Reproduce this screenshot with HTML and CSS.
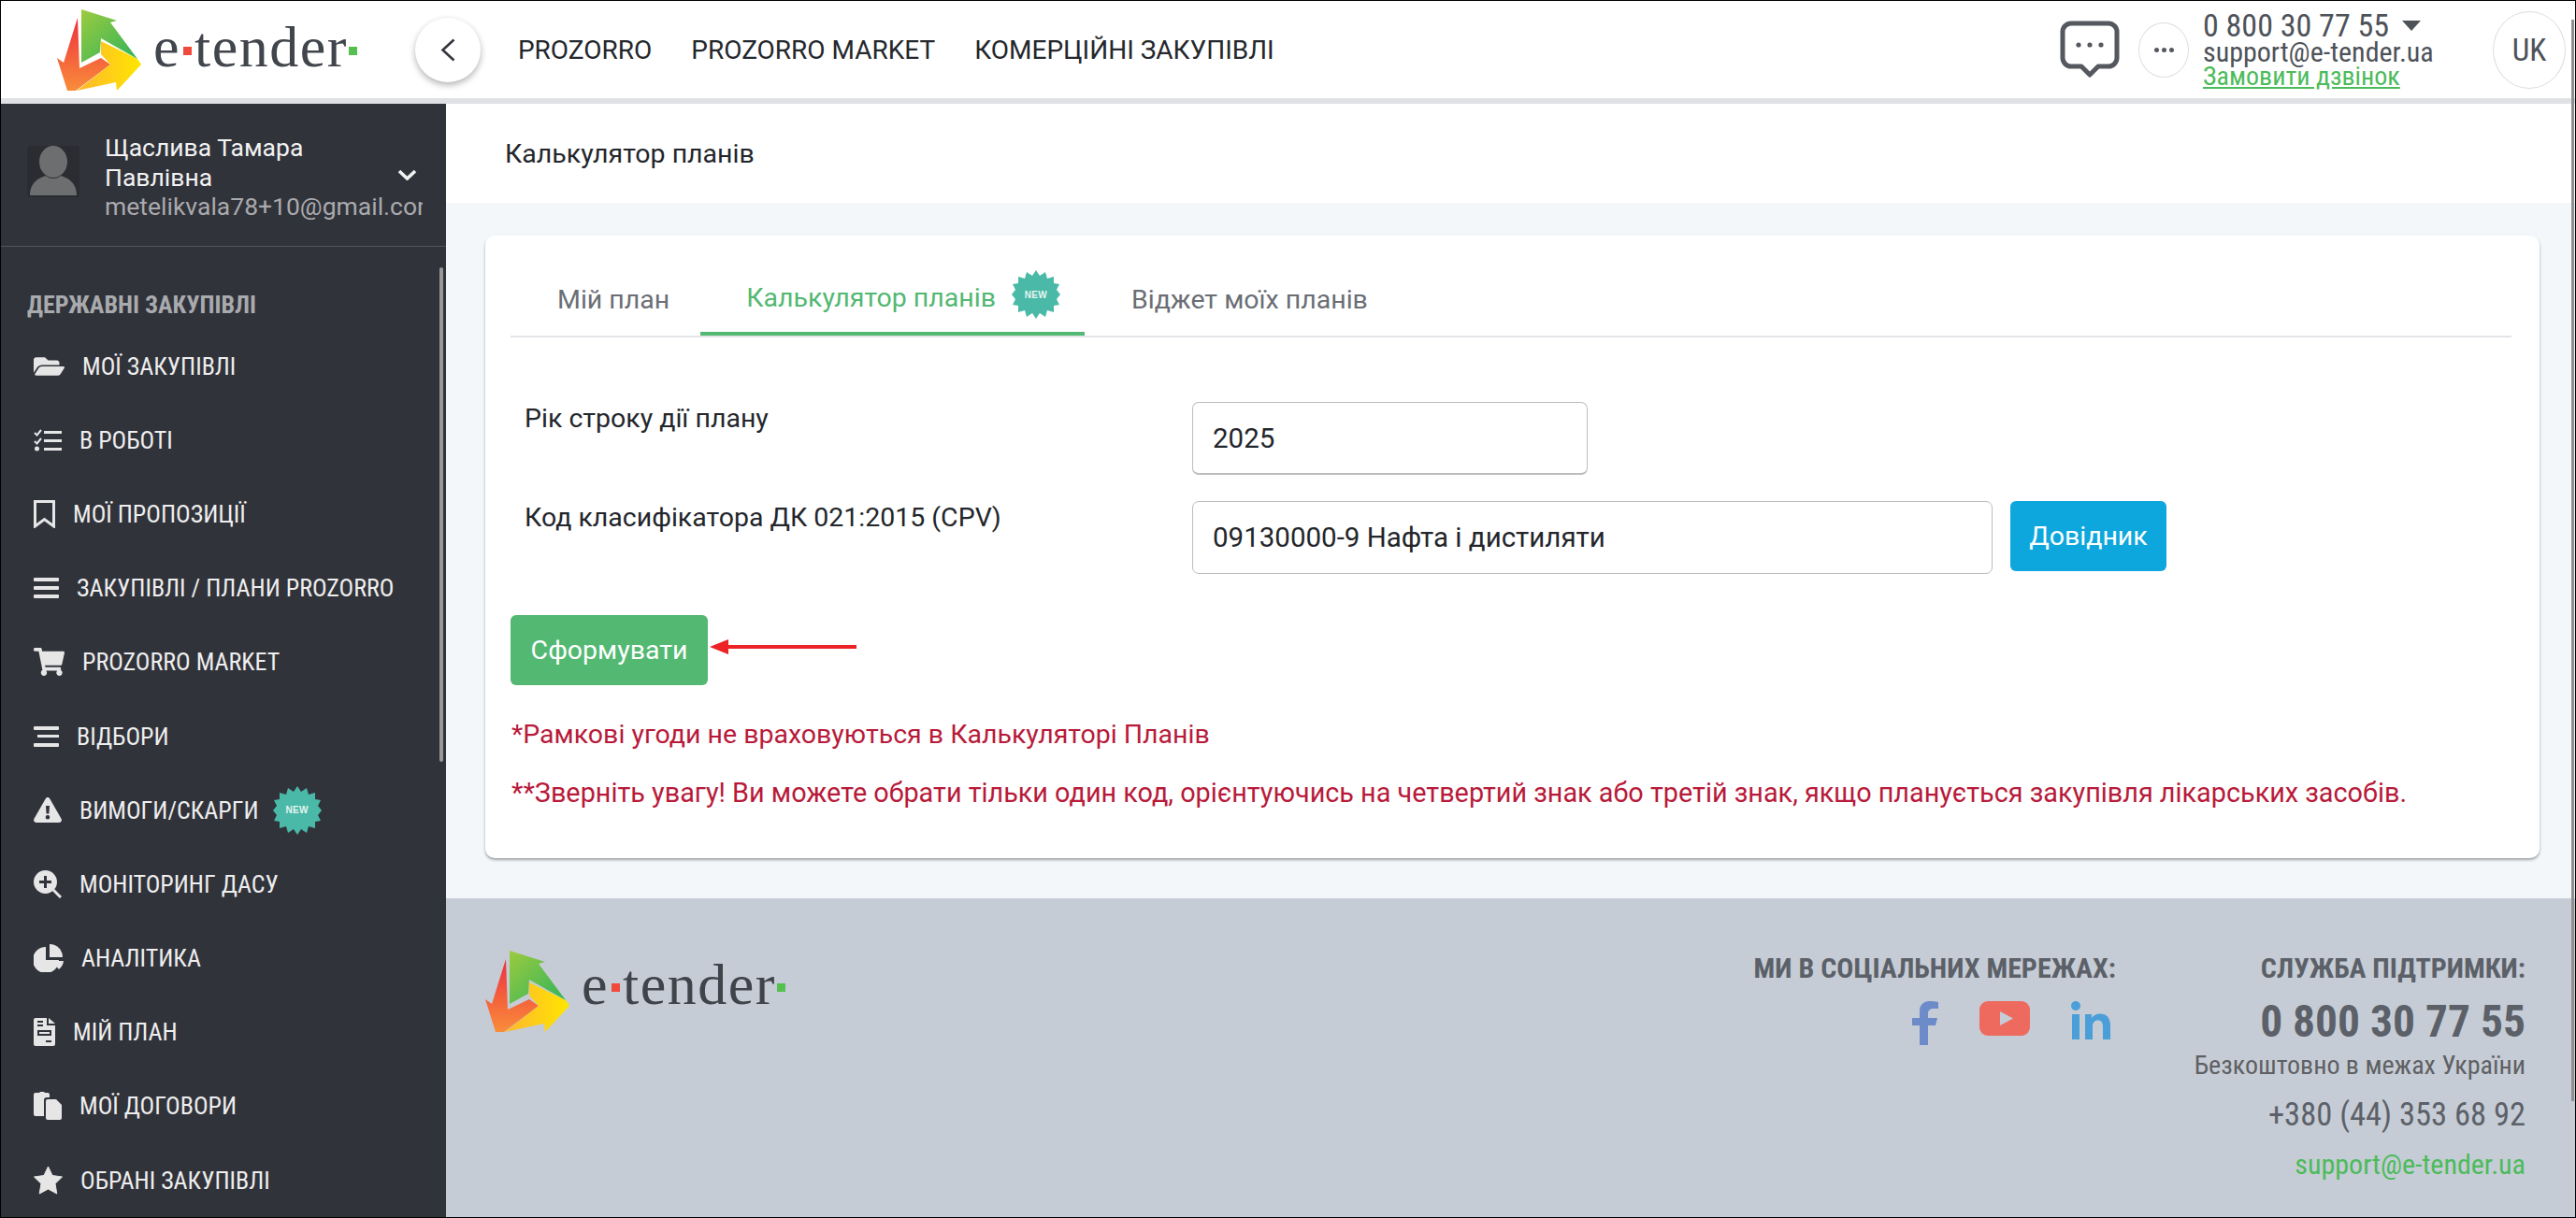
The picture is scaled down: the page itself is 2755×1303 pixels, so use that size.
FILE: index.html
```html
<!DOCTYPE html>
<html lang="uk">
<head>
<meta charset="utf-8">
<title>Калькулятор планів</title>
<link rel="stylesheet" href="styles.css">
</head>
<body>
<svg class="defs" width="0" height="0" aria-hidden="true">
  <defs>
    <linearGradient id="gGreen" x1="0" y1="0" x2="1" y2="1"><stop offset="0" stop-color="#9ccb3f"/><stop offset="1" stop-color="#2fb35a"/></linearGradient>
    <linearGradient id="gYellow" x1="0" y1="0" x2="1" y2="0"><stop offset="0" stop-color="#fdb62f"/><stop offset="1" stop-color="#ffe600"/></linearGradient>
    <linearGradient id="gRed" x1="0" y1="0" x2="0" y2="1"><stop offset="0" stop-color="#ee2f3f"/><stop offset="1" stop-color="#f98d3a"/></linearGradient>
    <symbol id="logoMark" viewBox="0 0 90 87">
      <path fill="url(#gRed)" d="M22 9 24 63 47 52 57 59 20 87H11L0 52 7 57Z"/>
      <path fill="url(#gYellow)" d="M47 34 86 53 90 59 64 87 63 78 21 87 57 59 47 48Z"/>
      <path fill="url(#gGreen)" d="M26 0 64 12 57 14 86 53 47 31 46 46 26 57Z"/>
    </symbol>
    <symbol id="burst" viewBox="0 0 52 52">
      <path fill="#4ab9a7" d="M26 0 30 6 36 2 38 9 45 7 45 14 51 15 48 21 52 26 48 31 51 37 45 38 45 45 38 43 36 50 30 46 26 52 22 46 16 50 14 43 7 45 7 38 1 37 4 31 0 26 4 21 1 15 7 14 7 7 14 9 16 2 22 6Z"/>
    </symbol>
  </defs>
</svg>

<div class="frame">
  <header class="topbar">
    <a class="logo">
      <svg class="logo-mark"><use href="#logoMark"/></svg>
      <span class="wordmark">e<i class="dot dot-red"></i>tender<i class="dot dot-green"></i></span>
    </a>
    <button class="back" aria-label="Назад">
      <svg width="16" height="25" viewBox="0 0 16 25"><path d="M14.500 1.500 2.500 12.500 14.500 23.500" fill="none" stroke="#33363d" stroke-width="2.600"/></svg>
    </button>
    <nav class="topnav">
      <a>PROZORRO</a>
      <a>PROZORRO MARKET</a>
      <a>КОМЕРЦІЙНІ ЗАКУПІВЛІ</a>
    </nav>
    <div class="top-right">
      <svg class="chat" width="64" height="62" viewBox="0 0 64 62">
        <path d="M12 3H52A9 9 0 0 1 61 12V40A9 9 0 0 1 52 49H41L32 58 23 49H12A9 9 0 0 1 3 40V12A9 9 0 0 1 12 3Z" fill="none" stroke="#55585f" stroke-width="5" stroke-linejoin="round"/>
        <circle cx="20" cy="26" r="2.6" fill="#55585f"/><circle cx="32" cy="26" r="2.6" fill="#55585f"/><circle cx="44" cy="26" r="2.6" fill="#55585f"/>
      </svg>
      <div class="more"><i></i><i></i><i></i></div>
      <div class="contacts">
        <div class="c-phone">0 800 30 77 55 <i class="caret"></i></div>
        <div class="c-mail">support@e-tender.ua</div>
        <a class="c-link">Замовити дзвінок</a>
      </div>
      <div class="lang">UK</div>
    </div>
  </header>

  <div class="main">
    <aside class="sidebar">
      <div class="user">
        <svg class="avatar" width="56" height="55" viewBox="0 0 56 55">
          <rect width="56" height="55" rx="4" fill="#2a2c31"/>
          <ellipse cx="28" cy="17" rx="15" ry="17" fill="#6d6e70"/>
          <path d="M3 53C3 38 14 34 20 32 24 36 32 36 36 32 42 34 53 38 53 53Z" fill="#6d6e70"/>
        </svg>
        <div class="user-text">
          <div class="user-name">Щаслива Тамара<br>Павлівна</div>
          <div class="user-mail">metelikvala78+10@gmail.com</div>
        </div>
        <svg class="user-chev" width="21" height="12" viewBox="0 0 21 12"><path d="M2 2 10.500 10 19 2" fill="none" stroke="#f2f2f2" stroke-width="3.600"/></svg>
      </div>
      <div class="side-title">ДЕРЖАВНІ ЗАКУПІВЛІ</div>
      <ul class="menu">
        <li><svg width="33" height="26" viewBox="0 0 576 512" preserveAspectRatio="none"><path d="M572.694 292.093L500.27 416.248A63.997 63.997 0 0 1 444.989 448H45.025c-18.523 0-30.064-20.093-20.731-36.093l72.424-124.155A64 64 0 0 1 152 256h399.964c18.523 0 30.064 20.093 20.73 36.093zM152 224h328v-48c0-26.51-21.49-48-48-48H272l-64-64H48C21.49 64 0 85.49 0 112v278.046l69.077-118.418C86.214 242.25 117.989 224 152 224z"/></svg>МОЇ ЗАКУПІВЛІ</li>
        <li><svg width="30" height="24" viewBox="0 0 30 24"><path d="M1 4 3.500 6.500 8 1M1 13 3.500 15.500 8 10" fill="none" stroke="#e6e6e6" stroke-width="2"/><circle cx="3.500" cy="21" r="2.500"/><rect x="11" y="2" width="19" height="3"/><rect x="11" y="11" width="19" height="3"/><rect x="11" y="20" width="19" height="3"/></svg>В РОБОТІ</li>
        <li><svg width="23" height="30" viewBox="0 0 23 30"><path d="M1.500 1.500H21.500V28L11.500 20.500 1.500 28Z" fill="none" stroke="#e6e6e6" stroke-width="3"/></svg>МОЇ ПРОПОЗИЦІЇ</li>
        <li><svg width="27" height="22" viewBox="0 0 27 22"><rect width="27" height="4" rx="1"/><rect y="9" width="27" height="4" rx="1"/><rect y="18" width="27" height="4" rx="1"/></svg>ЗАКУПІВЛІ / ПЛАНИ PROZORRO</li>
        <li><svg width="33" height="30" viewBox="0 0 576 512" preserveAspectRatio="none"><path d="M528.12 301.319l47.273-208C578.806 78.301 567.391 64 551.99 64H159.208l-9.166-44.81C147.758 8.021 137.93 0 126.529 0H24C10.745 0 0 10.745 0 24v16c0 13.255 10.745 24 24 24h69.883l70.248 343.435C147.325 417.1 136 435.222 136 456c0 30.928 25.072 56 56 56s56-25.072 56-56c0-15.674-6.447-29.835-16.824-40h209.647C430.447 426.165 424 440.326 424 456c0 30.928 25.072 56 56 56s56-25.072 56-56c0-22.172-12.888-41.332-31.579-50.405l5.517-24.276c3.413-15.018-8.002-29.319-23.403-29.319H218.117l-6.545-32h293.145c11.206 0 20.92-7.754 23.403-18.681z"/></svg>PROZORRO MARKET</li>
        <li><svg width="27" height="22" viewBox="0 0 27 22"><rect width="27" height="4" rx="1"/><rect x="4" y="9" width="23" height="3"/><rect y="18" width="27" height="4" rx="1"/></svg>ВІДБОРИ</li>
        <li><svg width="30" height="27" viewBox="0 0 30 27"><path fill-rule="evenodd" d="M15 0C16 0 16.800.6 17.300 1.500L29.600 23C30.600 24.800 29.300 27 27.300 27H2.700C.7 27-.6 24.800.4 23L12.700 1.500C13.200.6 14 0 15 0ZM13 9 13.600 17.500H16.400L17 9ZM15 19A2.300 2.300 0 1 0 15 23.600 2.300 2.300 0 0 0 15 19Z"/></svg>ВИМОГИ/СКАРГИ<span class="badge side-badge"><svg><use href="#burst"/></svg><b>NEW</b></span></li>
        <li><svg width="30" height="30" viewBox="0 0 30 30"><path fill-rule="evenodd" d="M12.500 0A12.500 12.500 0 1 1 12.500 25 12.500 12.500 0 0 1 12.500 0ZM11 6V11H6V14H11V19H14V14H19V11H14V6Z"/><path d="M21 21 29 29" stroke="#e6e6e6" stroke-width="3"/></svg>МОНІТОРИНГ ДАСУ</li>
        <li><svg width="32" height="30" viewBox="0 0 32 30"><path d="M13 3V17H27A14 14 0 1 1 13 3Z"/><path d="M17 0A14 14 0 0 1 31 14H17Z"/><path d="M19 18H32A14 14 0 0 1 27 27Z"/></svg>АНАЛІТИКА</li>
        <li><svg width="23" height="30" viewBox="0 0 23 30"><path fill-rule="evenodd" d="M2 0H14V8H23V28A2 2 0 0 1 21 30H2A2 2 0 0 1 0 28V2A2 2 0 0 1 2 0ZM4 3V5H10V3ZM4 7V9H10V7ZM4 13V19H19V13ZM6 15H17V17H6ZM13 24V26H19V24Z"/><path d="M16 0 23 6H16Z"/></svg>МІЙ ПЛАН</li>
        <li><svg width="30" height="30" viewBox="0 0 30 30"><path d="M2 1H6.500A2.500 2.500 0 0 1 11.500 1H15A2 2 0 0 1 17 3V6H14A3 3 0 0 0 11 9V26H2A2 2 0 0 1 0 24V3A2 2 0 0 1 2 1Z"/><path d="M15 8H24L30 14V28A2 2 0 0 1 28 30H15A2 2 0 0 1 13 28V10A2 2 0 0 1 15 8Z"/></svg>МОЇ ДОГОВОРИ</li>
        <li><svg width="31" height="31" viewBox="0 0 31 31"><path d="M15.500 1 20 10.500 30.500 12 23 19.300 24.800 30 15.500 25 6.200 30 8 19.300.5 12 11 10.500Z" stroke="#e6e6e6" stroke-linejoin="round"/></svg>ОБРАНІ ЗАКУПІВЛІ</li>
      </ul>
      <i class="side-scroll"></i>
    </aside>

    <div class="content">
      <div class="crumb">Калькулятор планів</div>
      <section class="page">
        <div class="card">
          <div class="tabs">
            <a class="tab">Мій план</a>
            <a class="tab tab-active">Калькулятор планів<span class="badge tab-badge"><svg><use href="#burst"/></svg><b>NEW</b></span></a>
            <a class="tab">Віджет моїх планів</a>
          </div>
          <div class="form">
            <label class="f-label">Рік строку дії плану</label>
            <div class="f-field"><div class="input input-year">2025</div></div>
            <label class="f-label">Код класифікатора ДК 021:2015 (CPV)</label>
            <div class="f-field"><div class="input input-code">09130000-9 Нафта і дистиляти</div><button class="btn btn-blue">Довідник</button></div>
          </div>
          <div class="action">
            <button class="btn btn-green">Сформувати</button>
            <svg class="arrow" width="157" height="18" viewBox="0 0 157 18"><path d="M0 9 20 1V7H157V11H20V17Z" fill="#ed2224"/></svg>
          </div>
          <p class="note">*Рамкові угоди не враховуються в Калькуляторі Планів</p>
          <p class="note note-long">**Зверніть увагу! Ви можете обрати тільки один код, орієнтуючись на четвертий знак або третій знак, якщо планується закупівля лікарських засобів.</p>
        </div>
      </section>
      <footer class="footer">
        <a class="logo foot-logo">
          <svg class="logo-mark"><use href="#logoMark"/></svg>
          <span class="wordmark">e<i class="dot dot-red"></i>tender<i class="dot dot-green"></i></span>
        </a>
        <div class="social">
          <div class="foot-title">МИ В СОЦІАЛЬНИХ МЕРЕЖАХ:</div>
          <div class="social-icons">
            <svg width="28" height="47" viewBox="0 0 28 47"><path fill="#6d8ac9" d="M8 47V26H0V18H8V11C8 4 12 0 19 0 23 0 28 1 28 1V8H24C19 8 17 10 17 13V18H27L25 26H17V47Z"/></svg>
            <svg width="54" height="37" viewBox="0 0 54 37"><rect width="54" height="37" rx="9" fill="#ef6a5e"/><path d="M22 11 36 18.500 22 26Z" fill="#c5ccd5"/></svg>
            <svg width="42" height="41" viewBox="0 0 42 41"><g fill="#4a9fd8"><circle cx="5" cy="5" r="5"/><rect x="1" y="14" width="8" height="27"/><path d="M15 14H22V18C24 15 27 13.500 31 13.500 38 13.500 42 18 42 26V41H34V27C34 23 32 20.500 29 20.500 25 20.500 23 23 23 27V41H15Z"/></g></svg>
          </div>
        </div>
        <div class="support">
          <div class="foot-title">СЛУЖБА ПІДТРИМКИ:</div>
          <div class="sup-phone">0 800 30 77 55</div>
          <div class="sup-free">Безкоштовно в межах України</div>
          <div class="sup-tel">+380 (44) 353 68 92</div>
          <a class="sup-mail">support@e-tender.ua</a>
        </div>
      </footer>
    </div>
  </div>
  <i class="page-scroll"></i>
</div>
</body>
</html>
```
FILE: styles.css
```css
* { box-sizing: border-box; }
html, body { margin: 0; height: 100%; overflow: hidden; }
body { font-family: Roboto, "Liberation Sans", sans-serif; color: #23262b; background: #fff; }
.defs { position: absolute; }
i { font-style: normal; display: block; }
ul { list-style: none; margin: 0; padding: 0; }
button { font-family: inherit; border: 0; }

.frame { position: relative; height: 1303px; border: 1px solid #000; display: flex; flex-direction: column; overflow: hidden; }

/* top bar */
.topbar { height: 110px; flex: none; border-bottom: 6px solid #dfe1e5; display: flex; align-items: center; background: #fff; padding-left: 60px; }
.logo { display: flex; align-items: center; }
.logo-mark { width: 90px; height: 87px; flex: none; }
.wordmark { font-family: "Liberation Serif", serif; font-size: 62px; line-height: 1; color: #41454c; display: flex; align-items: center; margin: 0 0 6px 13px; letter-spacing: 1.500px; }
.dot { width: 9px; height: 9px; margin: 8px 3px 0; flex: none; }
.dot-red { background: #f0493e; }
.dot-green { background: #55c04f; margin-left: 1px; }
.back { width: 70px; height: 69px; margin-left: 59px; border-radius: 50%; background: #fff; box-shadow: 0 3px 7px rgba(0,0,0,.3); display: flex; align-items: center; justify-content: center; padding: 0; flex: none; }
.topnav { display: flex; gap: 42px; margin-left: 40px; font-size: 28px; color: #24272c; }
.top-right { margin-left: auto; display: flex; align-items: center; padding-right: 10px; }
.chat { margin-right: 20px; }
.more { width: 54px; height: 59px; border: 1px solid #ddd; border-radius: 50%; display: flex; align-items: center; justify-content: center; gap: 3px; margin-right: 15px; }
.more i { width: 5px; height: 5px; border-radius: 50%; background: #55585f; }
.contacts { width: 310px; font-stretch: 75%; color: #4e5259; line-height: 1; }
.c-phone { font-size: 34px; line-height: 32px; display: flex; align-items: center; white-space: pre; }
.caret { width: 0; height: 0; border: 10px solid transparent; border-top: 11px solid #4e5259; border-bottom: 0; margin-left: 6px; }
.c-mail { font-size: 30px; line-height: 26px; }
.c-link { font-size: 28px; line-height: 26px; color: #4cbb5a; text-decoration: underline; display: block; }
.lang { width: 78px; height: 83px; border: 1px solid #ddd; border-radius: 50%; display: flex; align-items: center; justify-content: center; font-size: 33px; font-stretch: 75%; color: #4e5259; }

/* main layout */
.main { flex: 1; display: flex; min-height: 0; }
.sidebar { width: 476px; flex: none; background: #31333b; color: #e6e6e6; position: relative; overflow: hidden; }
.user { height: 153px; border-bottom: 1px solid #53555c; display: flex; padding: 45px 22px 0 28px; position: relative; }
.avatar { flex: none; margin-right: 27px; }
.user-text { width: 340px; overflow: hidden; white-space: nowrap; font-size: 26.500px; line-height: 31.500px; margin-top: -14px; }
.user-name { color: #f2f2f2; }
.user-mail { color: #a9aaad; }
.user-chev { position: absolute; right: 31px; top: 70px; }
.side-title { margin: 48px 0 0 28px; font-size: 26px; font-weight: 700; font-stretch: 75%; color: #a9aaad; line-height: 28px; }
.menu { margin-top: 12px; font-size: 26px; font-stretch: 75%; font-weight: 400; color: #eee; }
.menu li { height: 79.200px; display: flex; align-items: center; padding-left: 35px; white-space: nowrap; }
.menu li > svg { fill: #e6e6e6; margin-right: 19px; flex: none; }
.badge { position: relative; display: inline-flex; align-items: center; justify-content: center; width: 52px; height: 52px; flex: none; }
.badge svg { position: absolute; inset: 0; width: 52px; height: 52px; }
.badge b { position: relative; font-family: "Liberation Sans", sans-serif; font-size: 10px; color: #e6f5f2; letter-spacing: .3px; }
.side-badge { margin-left: 15px; }
.side-scroll { position: absolute; right: 3px; top: 175px; width: 4px; height: 529px; background: #999; border-radius: 2px; }

/* content */
.content { flex: 1; min-width: 0; display: flex; flex-direction: column; }
.crumb { height: 106px; flex: none; background: #fff; padding-left: 63px; display: flex; align-items: center; font-size: 28.500px; color: #23262b; }
.page { height: 744px; flex: none; background: #f4f7fa; padding: 35px 38px 0 42px; }
.card { position: relative; height: 666px; background: #fff; border-radius: 10px; box-shadow: 0 2px 3px rgba(0,0,0,.35); padding: 0 30px 0 27px; }
.tabs { height: 109px; display: flex; border-bottom: 2px solid #e2e4e7; font-size: 28.500px; color: #6a6e75; }
.tab { display: flex; align-items: center; padding: 29px 33px 0 50px; height: 107px; }
.tab-active { color: #52b872; border-bottom: 4px solid #52b872; padding: 29px 26px 0 49px; height: 107px; }
.tab-active + .tab { padding-left: 50px; }
.tab-badge { margin: -6px 0 0 17px; }
.form { display: grid; grid-template-columns: 729px 1fr; padding-top: 69px; row-gap: 28px; }
.f-label { font-size: 28.500px; padding: 0 0 0 15px; line-height: 36px; color: #23262b; }
.f-field { display: flex; gap: 19px; }
.input { height: 78px; border: 1px solid #bdbdbd; border-radius: 7px; background: #fff; display: flex; align-items: center; padding-left: 21px; font-size: 29.500px; color: #23262b; }
.input-year { width: 423px; border-bottom-width: 2px; }
.input-code { width: 856px; }
.btn { color: #fff; font-size: 28.500px; border-radius: 6px; height: 75px; padding: 0; }
.btn-blue { width: 167px; background: #0ea7dd; }
.btn-green { width: 211px; background: #52b872; }
.action { position: relative; margin-top: 44px; height: 75px; }
.arrow { position: absolute; left: 213px; top: 25px; }
.note { margin: 0 0 0 1px; font-size: 28.500px; color: #b81a3a; line-height: 36px; }
.note:first-of-type { margin-top: 35px; }
.note + .note { margin-top: 26px; }
.note-long { font-size: 28.800px; }

/* footer */
.footer { flex: 1; min-height: 0; background: #c5ccd5; position: relative; display: flex; padding: 56px 53px 0 42px; color: #5c6068; }
.foot-logo { align-self: flex-start; }
.foot-logo .wordmark { color: #3f434a; margin-bottom: 16px; }
.social { margin-left: auto; text-align: right; padding-top: 3px; }
.foot-title { font-size: 30px; font-weight: 700; font-stretch: 75%; line-height: 32px; }
.social-icons { display: flex; justify-content: flex-end; align-items: flex-start; gap: 44px; margin-top: 19px; padding-right: 6px; }
.support { width: 438px; text-align: right; font-stretch: 75%; padding-top: 3px; }
.sup-phone { font-size: 47.500px; font-weight: 700; line-height: 54px; margin-top: 14px; }
.sup-free { font-size: 28px; line-height: 32px; margin-top: 4px; color: #5f6063; }
.sup-tel { font-size: 34.500px; line-height: 38px; margin-top: 17px; }
.sup-mail { display: block; font-size: 30px; line-height: 32px; margin-top: 19px; color: #4cbb5a; }

.page-scroll { position: absolute; right: 1px; top: 20px; width: 3px; height: 1157px; background: #8f8f8f; }
```
